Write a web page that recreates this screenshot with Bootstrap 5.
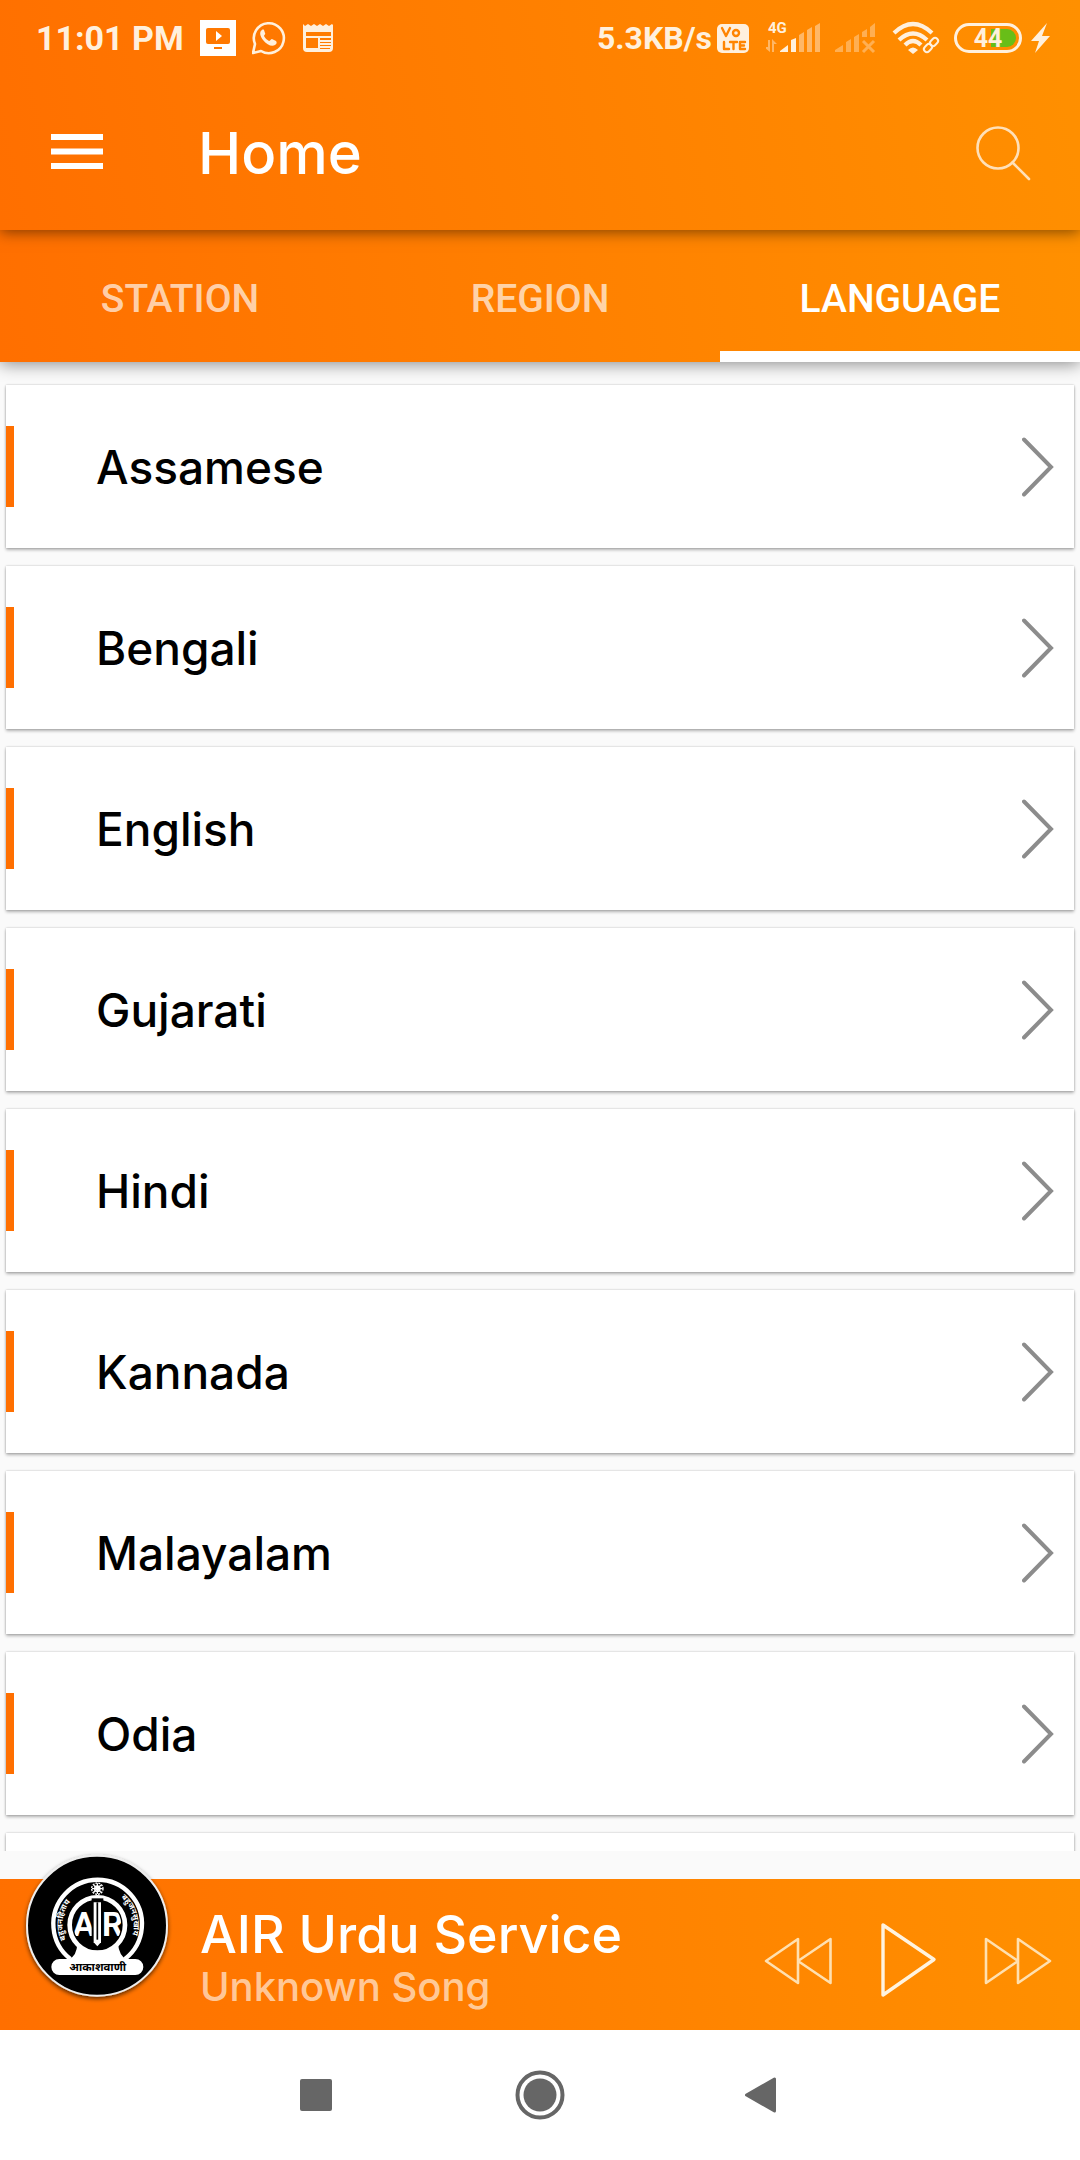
<!DOCTYPE html>
<html lang="en">
<head>
<meta charset="utf-8">
<meta name="viewport" content="width=device-width, initial-scale=1">
<title>Home</title>
<link rel="stylesheet" href="https://cdn.jsdelivr.net/npm/bootstrap@5.3.0/dist/css/bootstrap.min.css">
<style>
  :root { --brand: #ff6f00; --brand-end: #ff9000; --soft: #fff0dd; }
  body { background: #fafafa; font-family: Inter, "Noto Sans", sans-serif; font-weight: 500; color: #000; }
  svg { display: block; flex: none; }
  .grad { background: linear-gradient(82deg, var(--brand), var(--brand-end)); }
  .top-area { background: linear-gradient(78deg, var(--brand), var(--brand-end)); box-shadow: 0 2px 14px rgba(0,0,0,.5); z-index: 3; }
  .status { height: 76px; padding: 0 28px 0 36px; font: 700 34px/40px Roboto, sans-serif; color: var(--soft); }
  .speed { font-size: 32px; }
  .toolbar { height: 154px; padding: 0 40px; }
  .icon-btn { border: 0; background: none; padding: 0; }
  .page-title { font-size: 58px; line-height: 64px; font-weight: 500; margin: 0 0 0 82px; }
  .tabs { z-index: 2; box-shadow: 0 2px 16px rgba(0,0,0,.45); font: 500 39px/48px Roboto, sans-serif; }
  .tabs .nav-link { height: 132px; padding: 16px 0 0; border-bottom: 11px solid transparent; border-radius: 0; color: rgba(255,255,255,.68); display: flex; align-items: center; justify-content: center; }
  .tabs .nav-link.active { color: #fff; border-color: #fff; }
  .stations { flex: 1 1 0; min-height: 0; overflow: hidden; padding: 23px 6px 0; gap: 18px; margin-bottom: 28px; }
  .lang { min-height: 163px; flex: none; background: #fff; color: #000; font-size: 46px; line-height: 56px; text-decoration: none; box-shadow: 0 2px 3px rgba(0,0,0,.28), 0 0 2px rgba(0,0,0,.22); padding-right: 20px; }
  .lang::before { content: ""; width: 8px; height: 81px; background: var(--brand); margin-right: 82px; }
  .player { height: 151px; padding: 0 24px 0 200px; z-index: 2; }
  .cover { position: absolute; left: 15px; top: -34px; }
  .song { font-size: 52px; line-height: 56px; }
  .artist { font-size: 40px; line-height: 48px; color: rgba(255,255,255,.62); }
  .sysnav { height: 130px; background: #fff; }
  .sysnav button { width: 224px; height: 130px; }
</style>
</head>
<body class="d-flex flex-column vh-100 overflow-hidden">
<header class="top-area position-relative">
  <div class="status d-flex align-items-center">
    <span>11:01 PM</span>
    <svg class="ms-3" width="36" height="36" viewBox="0 0 36 36"><path fill="#fff" d="M0 0h36v36H0z"/><rect x="6" y="8" width="24" height="16" rx="2" fill="#ff7800"/><path fill="#fff" d="M16 11v10l6-5z"/><path fill="#ff7800" d="M14 27h8v2h-8z"/></svg>
    <svg class="ms-3" width="34" height="36" viewBox="1 0 34 36"><path d="M2 33l2-9A15 15 0 1 1 10 31z" fill="none" stroke="#fff0dd" stroke-width="2.6" stroke-linejoin="round"/><path fill="#fff0dd" d="M11 10c-3 2-2 6 1 10 4 5 9 7 12 5 2-1 2-3 1-4l-4-2c-1 0-2 2-3 2-2-1-4-3-5-5 0-1 2-2 1-3l-1-3c-1-1-1-1-2 0z"/></svg>
    <svg class="ms-3" width="32" height="36" viewBox="0 0 32 36"><path fill="#fff0dd" d="M1 4l2 2 3-2 3 2 3-2 3 2 3-2 3 2 3-2 3 2 3-2 1 1v23a4 4 0 0 1-4 4H5a4 4 0 0 1-4-4z"/><path fill="#ff7c00" d="M4 12h25v4H4zM4 18h12v10H4zM18 18h11v2H18zM18 22h11v1H18zM18 25h11v1H18zM18 28h10v1H18z"/></svg>
    <span class="speed ms-auto">5.3KB/s</span>
    <svg class="ms-1" width="34" height="36" viewBox="0 0 34 36"><rect x="1" y="4" width="32" height="29" rx="5" fill="#fff0dd"/><g fill="none" stroke="#ff8400" stroke-width="2.4" stroke-linecap="round" stroke-linejoin="round"><path d="M6 8l4 8 4-8M8 22v7h5M14 22h7M17.500 22v7M29 22h-5v7h5M24 25.500h4"/><circle cx="20" cy="13" r="3"/></g></svg>
    <svg class="ms-3" width="60" height="36" viewBox="3 0 60 36"><text x="5" y="13" font-family="Roboto" font-size="15" font-weight="700" fill="#fff0dd">4G</text><g fill="#fff" opacity=".4"><path d="M5 20h2v12L1 27h4zM9 32V19l5 5h-3v8zM36 15l5-3v20h-5zM44 10l5-3v25h-5zM52 6l5-3v29h-5z"/></g><path fill="#fff0dd" d="M17 31l8-6v7h-8zM28 20l5-2v14h-5z"/></svg>
    <svg class="ms-2" width="44" height="36" viewBox="0 0 44 36"><g fill="#fff" opacity=".32"><path d="M1 32v-2l8-5v7zM12 22l5-3v13h-5zM20 17l5-3v18h-5zM28 12l5-3v8h-5zM36 7l5-4v14h-5z"/><path d="M29 21l11 11M40 21L29 32" stroke="#fff" stroke-width="3"/></g></svg>
    <svg class="ms-3" width="44" height="36" viewBox="2 0 44 36" overflow="visible"><g fill="none" stroke="#fff0dd" stroke-width="4.200"><path d="M2 13Q21-5 40 13M7 20Q21 7 35 20M13 25Q21 17 29 25"/></g><path fill="#fff0dd" d="M16 30q5-5 10 0l-5 4z"/><g fill="none" stroke="#fff0dd" stroke-width="2"><rect x="-4.500" y="-3" width="9" height="6" rx="3" transform="translate(42 22) rotate(-45)"/><rect x="-4.500" y="-3" width="9" height="6" rx="3" transform="translate(36 28) rotate(-45)"/></g></svg>
    <svg class="ms-3" width="68" height="36" viewBox="0 0 68 36"><rect x="1.500" y="4.500" width="65" height="27" rx="13.500" fill="none" stroke="#fff0dd" stroke-width="3"/><path fill="#68be18" d="M37 9h16a9 9 0 0 1 0 18H37z"/><text x="34" y="27" text-anchor="middle" font-family="Roboto" font-size="25" font-weight="700" fill="#fff0dd">44</text></svg>
    <svg class="ms-2" width="22" height="36" viewBox="0 0 22 36"><path fill="#fff0dd" d="M17 3L1 21h8L5 33 20 16h-8z"/></svg>
  </div>
  <div class="toolbar d-flex align-items-center text-white">
    <button class="icon-btn" aria-label="Menu"><svg width="76" height="60" viewBox="0 0 76 60"><path d="M11 14h52M11 28.500h52M11 43h52" stroke="#fff" stroke-width="6"/></svg></button>
    <h1 class="page-title">Home</h1>
    <button class="icon-btn ms-auto" aria-label="Search"><svg width="72" height="60" viewBox="0 0 72 60"><g fill="none" stroke="#ffe0b8" stroke-width="2.600" stroke-linecap="round"><circle cx="30" cy="25" r="20.500"/><path d="M44.500 39.500L61 56"/></g></svg></button>
  </div>
</header>
<nav class="grad tabs nav nav-fill row g-0 position-relative">
  <a class="nav-link col-4" href="#">STATION</a>
  <a class="nav-link col-4" href="#">REGION</a>
  <a class="nav-link col-4 active" aria-current="page" href="#">LANGUAGE</a>
</nav>
<svg width="0" height="0" class="position-absolute"><symbol id="chev" viewBox="0 0 32 60"><path d="M2 2.500L29 30 2 57.500" fill="none" stroke="#8c8c8c" stroke-width="4" stroke-linecap="round"/></symbol></svg>
<main class="stations d-flex flex-column">
  <a class="lang d-flex align-items-center" href="#">Assamese<svg class="ms-auto" width="32" height="60"><use href="#chev"/></svg></a>
  <a class="lang d-flex align-items-center" href="#">Bengali<svg class="ms-auto" width="32" height="60"><use href="#chev"/></svg></a>
  <a class="lang d-flex align-items-center" href="#">English<svg class="ms-auto" width="32" height="60"><use href="#chev"/></svg></a>
  <a class="lang d-flex align-items-center" href="#">Gujarati<svg class="ms-auto" width="32" height="60"><use href="#chev"/></svg></a>
  <a class="lang d-flex align-items-center" href="#">Hindi<svg class="ms-auto" width="32" height="60"><use href="#chev"/></svg></a>
  <a class="lang d-flex align-items-center" href="#">Kannada<svg class="ms-auto" width="32" height="60"><use href="#chev"/></svg></a>
  <a class="lang d-flex align-items-center" href="#">Malayalam<svg class="ms-auto" width="32" height="60"><use href="#chev"/></svg></a>
  <a class="lang d-flex align-items-center" href="#">Odia<svg class="ms-auto" width="32" height="60"><use href="#chev"/></svg></a>
  <div class="lang"></div>
</main>
<section class="grad player position-relative d-flex align-items-center text-white">
  <svg class="cover" width="165" height="165" viewBox="0 0 495 495">
    <defs>
      <filter id="sh" x="-10%" y="-10%" width="120%" height="125%"><feDropShadow dx="0" dy="6" stdDeviation="6" flood-opacity=".65"/></filter>
      <clipPath id="disc"><circle cx="247" cy="240" r="72"/></clipPath>
      <path id="arcL" d="M153 283A106 106 0 0 1 180 156"/>
      <path id="arcR" d="M318 158A106 106 0 0 1 342 292"/>
    </defs>
    <circle cx="246" cy="242" r="210" fill="#000" stroke="#eee" stroke-width="6" filter="url(#sh)"/>
    <path d="M166 342A133 133 0 1 1 330 342" fill="none" stroke="#fff" stroke-width="13"/>
    <circle cx="247" cy="240" r="83" fill="none" stroke="#fff" stroke-width="14"/>
    <path fill="#fff" d="M133 342h30q22-10 24-44a84 84 0 0 0 122 0q4 34 24 44h28a24 24 0 0 1 0 48H133a24 24 0 0 1 0-48z"/>
    <g clip-path="url(#disc)" fill="#fff" font-family="Roboto, sans-serif" font-weight="700">
      <text y="274" font-size="100"><tspan x="173">A</tspan><tspan x="261">R</tspan></text>
    </g>
    <path fill="#000" d="M230 160h35v152h-35z"/><path fill="#fff" d="M236 172h22v120l-11 12-11-12z"/><path d="M247 172v112" stroke="#000" stroke-width="5"/>
    <g stroke="#fff" stroke-width="4" fill="none"><circle cx="247" cy="131" r="17" fill="#000" stroke-dasharray="6 3"/><circle cx="247" cy="131" r="8"/><path d="M247 115v32M231 131h32M236 120l22 22M258 120l-22 22"/></g>
    <g fill="#fff" font-size="24" font-family="'Noto Sans Devanagari', 'Noto Sans', sans-serif" font-weight="700"><text><textPath href="#arcL">बहुजनहिताय</textPath></text><text><textPath href="#arcR">बहुजनसुखाय</textPath></text></g>
    <text x="248" y="377" text-anchor="middle" font-size="34" font-weight="700" font-family="'Noto Sans Devanagari', 'Noto Sans', sans-serif">आकाशवाणी</text>
  </svg>
  <div class="pt-2">
    <div class="song">AIR Urdu Service</div>
    <div class="artist">Unknown Song</div>
  </div>
  <div class="ms-auto d-flex align-items-center pt-2">
    <button class="icon-btn" aria-label="Previous"><svg width="76" height="76" viewBox="2 -2 76 76"><path d="M38 16v44L6 38zM70.500 16v44L38 38z" fill="none" stroke="#ffe0b0" stroke-width="2.600" stroke-linejoin="round"/></svg></button>
    <button class="icon-btn mx-4" aria-label="Play"><svg width="94" height="76" viewBox="-2 -1 94 76"><path d="M19 3v70l51-35.500z" fill="none" stroke="#fff3df" stroke-width="3.400" stroke-linejoin="round"/></svg></button>
    <button class="icon-btn" aria-label="Next"><svg width="76" height="76" viewBox="0 -2 76 76"><path d="M6 16v44l32-22zM38 16v44l32-22z" fill="none" stroke="#ffe0b0" stroke-width="2.600" stroke-linejoin="round"/></svg></button>
  </div>
</section>
<footer class="sysnav d-flex justify-content-center">
  <button class="icon-btn d-flex align-items-center justify-content-center" aria-label="Recent apps"><svg width="32" height="32"><rect width="32" height="32" rx="2" fill="#666"/></svg></button>
  <button class="icon-btn d-flex align-items-center justify-content-center" aria-label="Home screen"><svg width="50" height="50"><circle cx="25" cy="25" r="22.500" fill="none" stroke="#666" stroke-width="4"/><circle cx="25" cy="25" r="16.500" fill="#666"/></svg></button>
  <button class="icon-btn d-flex align-items-center justify-content-center" aria-label="Back"><svg width="38" height="38"><path d="M1.500 19L29.500 3v32z" fill="#666" stroke="#666" stroke-width="3" stroke-linejoin="round"/></svg></button>
</footer>
<script src="https://cdn.jsdelivr.net/npm/bootstrap@5.3.0/dist/js/bootstrap.bundle.min.js"></script>
</body>
</html>
